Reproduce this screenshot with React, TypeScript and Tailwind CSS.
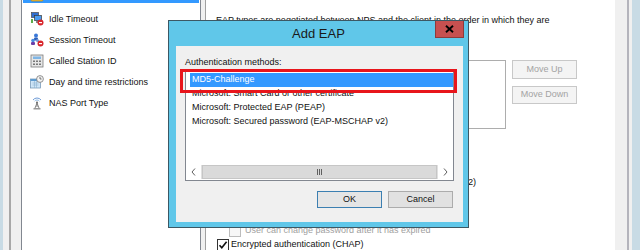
import React from "react";

const font = "font-['Liberation_Sans',Arial,sans-serif]";

function IconYellow() {
  return (
    <svg width="14" height="14" viewBox="0 0 14 14">
      <rect x="1" y="1" width="12" height="12" rx="1" fill="#f2c23a" stroke="#b8871a" strokeWidth="0.8" />
      <rect x="3" y="9" width="8" height="1" fill="#fbe69a" />
    </svg>
  );
}

function IconIdle() {
  return (
    <svg width="14" height="14" viewBox="0 0 14 14">
      <rect x="1.5" y="0.5" width="7" height="5" fill="#2f6fd0" stroke="#4a4a4a" strokeWidth="0.7" />
      <rect x="4.5" y="3.5" width="7" height="5" fill="#4a9cf0" stroke="#3a3a3a" strokeWidth="0.7" />
      <rect x="1" y="7" width="2" height="4" fill="#5cae4a" />
      <rect x="6" y="9" width="3" height="2" fill="#8a8a8a" />
      <circle cx="10.5" cy="10.5" r="3" fill="#d8262c" />
      <rect x="9" y="10" width="3" height="1.2" fill="#fff" />
    </svg>
  );
}

function IconSession() {
  return (
    <svg width="14" height="14" viewBox="0 0 14 14">
      <circle cx="6" cy="2.5" r="2" fill="#3a78d8" />
      <rect x="4" y="4.5" width="4" height="3" rx="1" fill="#2a5fb8" />
      <circle cx="3" cy="7.5" r="1.8" fill="#4a8ae0" />
      <rect x="1" y="9" width="4" height="3" rx="1" fill="#6a3fa8" />
      <circle cx="7.5" cy="7.5" r="1.6" fill="#7a9ad8" />
      <circle cx="10.5" cy="10.5" r="3" fill="#d8262c" />
      <rect x="9" y="10" width="3" height="1.2" fill="#fff" />
    </svg>
  );
}

function IconStation() {
  return (
    <svg width="14" height="14" viewBox="0 0 14 14">
      <rect x="1" y="1" width="12" height="12" fill="#e6e6e6" stroke="#7a7a7a" strokeWidth="0.8" />
      <rect x="3" y="2.5" width="8" height="2.5" fill="#7fb6e6" />
      <rect x="3" y="6.5" width="2" height="1.5" fill="#777" />
      <rect x="6" y="6.5" width="2" height="1.5" fill="#777" />
      <rect x="9" y="6.5" width="2" height="1.5" fill="#777" />
      <rect x="3" y="9.5" width="2" height="1.5" fill="#777" />
      <rect x="6" y="9.5" width="2" height="1.5" fill="#777" />
      <rect x="9" y="9.5" width="2" height="1.5" fill="#777" />
    </svg>
  );
}

function IconDay() {
  return (
    <svg width="14" height="14" viewBox="0 0 14 14">
      <rect x="0.5" y="4" width="10" height="9" fill="#cfe6f7" stroke="#6a8fb0" strokeWidth="0.7" />
      <rect x="0.5" y="4" width="10" height="2" fill="#5d9bd0" />
      <path d="M2.5 8h6M2.5 10h6M4.5 6v7M6.5 6v7" stroke="#8fb3d0" strokeWidth="0.6" />
      <circle cx="10" cy="4" r="3.4" fill="#f4f4f4" stroke="#7a7a7a" strokeWidth="0.8" />
      <path d="M10 2v2h1.6" stroke="#444" strokeWidth="0.7" fill="none" />
    </svg>
  );
}

function IconNas() {
  return (
    <svg width="14" height="14" viewBox="0 0 14 14">
      <path d="M3 4a5 5 0 0 1 8 0" stroke="#5d8fd0" strokeWidth="0.9" fill="none" />
      <path d="M4.6 5.2a3 3 0 0 1 4.8 0" stroke="#7aaee0" strokeWidth="0.9" fill="none" />
      <circle cx="7" cy="6.3" r="0.9" fill="#555" />
      <path d="M7 7v4M5 12l2-5 2 5" stroke="#777" strokeWidth="0.9" fill="none" />
      <rect x="3.5" y="12" width="7" height="1.5" fill="#999" />
    </svg>
  );
}

function Check() {
  return (
    <svg width="10" height="10" viewBox="0 0 10 10">
      <path d="M1.5 5.2l2.3 2.6L8.6 1.8" stroke="#111" strokeWidth="1.6" fill="none" />
    </svg>
  );
}

const leftItems = [
  { label: "Idle Timeout", icon: <IconIdle /> },
  { label: "Session Timeout", icon: <IconSession /> },
  { label: "Called Station ID", icon: <IconStation /> },
  { label: "Day and time restrictions", icon: <IconDay /> },
  { label: "NAS Port Type", icon: <IconNas /> },
];

const methods = [
  "Microsoft: Smart Card or other certificate",
  "Microsoft: Protected EAP (PEAP)",
  "Microsoft: Secured password (EAP-MSCHAP v2)",
];

export default function App() {
  return (
    <div className={`relative flex w-[640px] h-[250px] overflow-hidden bg-white text-[9px] text-[#111] ${font}`}>
      {/* left window chrome */}
      <div className="w-[3px] bg-[#c8dbe5]" />
      <div className="w-[6px] bg-[#f0f0f0]" />
      <div className="w-[2px] bg-[#a8a8a8]" />
      <div className="w-[10px] bg-[#f0f0f0]" />

      {/* conditions list */}
      <div className="w-[180px] border-x border-[#828790] bg-white">
        <div className="-mt-[13px] mx-px h-[16px] mb-[5px] bg-[#3399ff] flex items-center gap-[5px] pl-[7px] text-white">
          <IconYellow />
          <span className="leading-[12px]">Authentication Methods</span>
        </div>
        {leftItems.map((it) => (
          <div key={it.label} className="h-[21px] flex items-center gap-[5px] pl-[8px]">
            {it.icon}
            <span className="leading-[12px]">{it.label}</span>
          </div>
        ))}
      </div>

      <div className="w-[4px] bg-[#f0f0f0]" />

      {/* settings panel */}
      <div className="w-[410px] border-l border-[#a0a0a0] bg-white pl-[10px] pt-[14px]">
        <p className="leading-[12px]">
          EAP types are negotiated between NPS and the client in the order in which they are
        </p>
        <div className="mt-[34px] flex">
          <div className="w-[290px] h-[69px] border border-[#adadad] bg-white" />
          <div className="ml-[6px] flex flex-col gap-[7px]">
            <div className="w-[65px] h-[19px] border border-[#c8c8c8] bg-[#f4f4f4] text-[#a3a3a3] flex items-center justify-center">
              Move Up
            </div>
            <div className="w-[65px] h-[18px] border border-[#c8c8c8] bg-[#f4f4f4] text-[#a3a3a3] flex items-center justify-center">
              Move Down
            </div>
          </div>
        </div>
        <div className="mt-[48px] flex items-center h-[12px] gap-[2px] pl-px">
          <div className="w-[12px] h-[12px] border border-[#333] bg-white flex items-center justify-center">
            <Check />
          </div>
          <span className="text-[9.2px]">Microsoft Encrypted Authentication version 2 (MS-CHAP-v2)</span>
        </div>
        <div className="mt-[36px] flex items-center h-[12px] gap-[4px] pl-[13px] text-[#a0a0a0]">
          <div className="w-[12px] h-[12px] border border-[#bcbcbc] bg-[#f7f7f7]" />
          <span>User can change password after it has expired</span>
        </div>
        <div className="mt-[2px] flex items-center h-[12px] gap-[2px] pl-px">
          <div className="w-[12px] h-[12px] border border-[#333] bg-white flex items-center justify-center">
            <Check />
          </div>
          <span>Encrypted authentication (CHAP)</span>
        </div>
      </div>

      {/* right window chrome */}
      <div className="w-[12px] bg-[#f0f0f0]" />
      <div className="w-[2px] bg-[#b4b4bc]" />
      <div className="w-[3px] bg-[#f0f0f0]" />
      <div className="flex-1 bg-[#c8dbe5]" />

      {/* Add EAP dialog */}
      <div className="absolute left-[168px] top-[20px] w-[301px] h-[208px] border border-[#3c5864] bg-[#60c7e9] flex flex-col">
        <div className="relative h-[25px] flex items-center justify-center text-[13px] text-[#1a1a1a]">
          Add EAP
          <div className="absolute right-[4px] top-0 w-[29px] h-[17px] bg-[#c75050] border border-[#8e3b3b] border-t-0 flex items-center justify-center">
            <svg width="9" height="8" viewBox="0 0 9 8">
              <path d="M1 0.8l7 6.4M8 0.8l-7 6.4" stroke="#000" strokeWidth="1.9" />
            </svg>
          </div>
        </div>
        <div className="ml-[7px] mr-[5px] mb-[5px] flex-1 bg-[#f0f0f0] pl-[9px] pt-[10px] flex flex-col">
          <div className="leading-[12px]">Authentication methods:</div>
          <div className="mt-[3px] w-[269px] h-[110px] border border-[#828790] bg-white flex flex-col pt-px pb-px">
            <div className="flex-1">
              <div className="ml-[4px] h-[14px] bg-[#3399ff] text-white flex items-center pl-[2px]">MD5-Challenge</div>
              {methods.map((m) => (
                <div key={m} className="ml-[4px] h-[14px] flex items-center pl-[2px]">
                  {m}
                </div>
              ))}
            </div>
            <div className="h-[14px] flex bg-[#e8e8e8]">
              <div className="w-[16px] bg-white flex items-center justify-center border-r border-[#e0e0e0]">
                <svg width="5" height="8" viewBox="0 0 5 8">
                  <path d="M4 0.5L1 4l3 3.5" stroke="#606060" strokeWidth="1" fill="none" />
                </svg>
              </div>
              <div className="flex-1 bg-[#dadada] border border-[#c6c6c6] flex items-center justify-center">
                <svg width="6" height="6" viewBox="0 0 6 6">
                  <path d="M0.5 0v6M2.5 0v6M4.5 0v6" stroke="#606060" strokeWidth="1" />
                </svg>
              </div>
              <div className="w-[16px] bg-white flex items-center justify-center border-l border-[#e0e0e0]">
                <svg width="5" height="8" viewBox="0 0 5 8">
                  <path d="M1 0.5L4 4 1 7.5" stroke="#606060" strokeWidth="1" fill="none" />
                </svg>
              </div>
            </div>
          </div>
          <div className="mt-[10px] flex justify-end gap-[6px] pr-[10px]">
            <div className="w-[65px] h-[17px] border border-[#3c7fb1] bg-[#e5e5e5] flex items-center justify-center">OK</div>
            <div className="w-[65px] h-[17px] border border-[#acacac] bg-[#e1e1e1] flex items-center justify-center">Cancel</div>
          </div>
        </div>
      </div>

      {/* red annotation */}
      <div className="absolute left-[180px] top-[69px] w-[277px] h-[24px] border-[3px] border-[#e8151b]" />
    </div>
  );
}
